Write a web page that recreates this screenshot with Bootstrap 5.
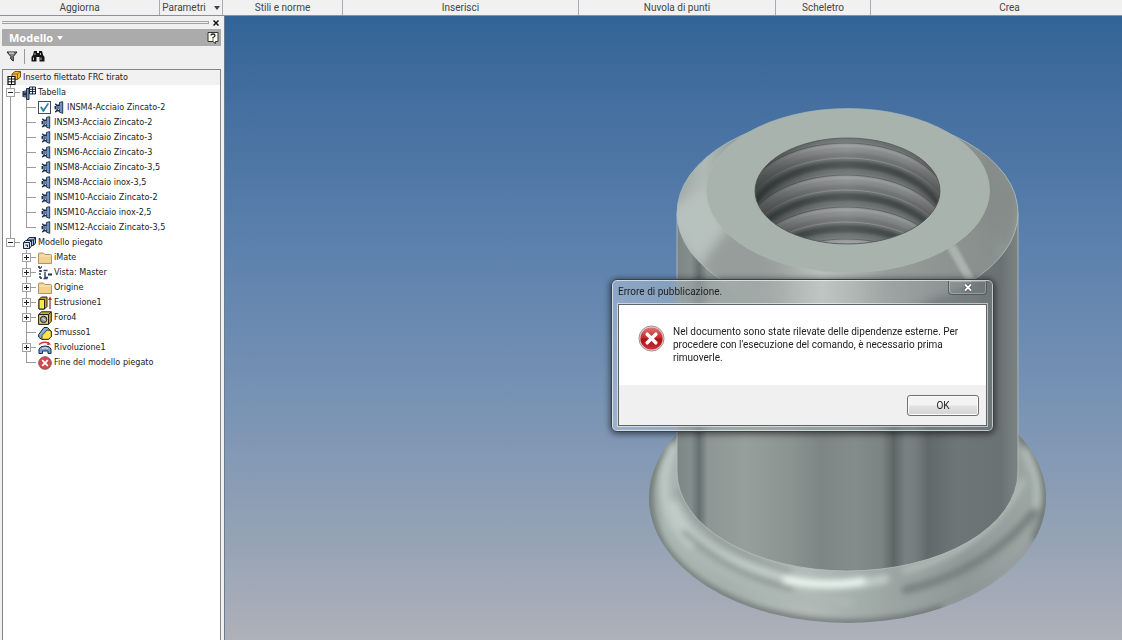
<!DOCTYPE html>
<html lang="it">
<head>
<meta charset="utf-8">
<meta name="viewport" content="width=device-width, initial-scale=1">
<title>Inserto filettato FRC tirato</title>
<link rel="stylesheet" href="https://cdn.jsdelivr.net/npm/bootstrap@5.3.0/dist/css/bootstrap.min.css">
<style>
  body { font-family: Roboto, "Open Sans", sans-serif; font-size: 10px; line-height: 15px; color: #333; background: #f0f0f0; }
  button { font: inherit; color: inherit; border: 0; background: none; padding: 0; }

  /* ribbon panel titles */
  .ribbon { height: 16px; background: #f1f1f1; border-bottom: 1px solid #8d9196; color: #454545; }
  .panel-title { border-right: 1px solid #a9adb2; }
  .w-update { width: 160px; } .w-params { width: 63px; } .w-styles { width: 120px; }
  .w-insert { width: 236px; } .w-cloud { width: 197px; } .w-frame { width: 95px; }
  .w-create { padding-left: 26px; }
  .caret { border: 3px solid transparent; border-top: 4px solid #444; border-bottom: 0; }

  /* model browser */
  .browser { width: 225px; border-right: 1px solid #6c7c8e; padding: 0 3px 0 2px; }
  .grip { height: 3px; border: 1px solid #a3a3a3; border-left: 0; }
  .strip { height: 13px; padding-right: 2px; gap: 4px; }
  .browser-head { height: 17px; background: #ababab; color: #fff; font-family: "Open Sans", sans-serif; font-size: 11px; padding: 0 2px 0 7px; }
  .caret-light { border-top-color: #fff; }
  .tools { height: 23px; padding: 0 0 3px 4px; gap: 6px; }
  .tool-rule { width: 1px; height: 15px; background: #9a9a9a; }
  .tree-box { border: 1px solid #858585; border-bottom: 0; background: #fff; color: #222; font-family: "DejaVu Sans Condensed", "DejaVu Sans", sans-serif; font-size: 9px; }
  .tree-root { background: #f1f1f1; padding-left: 4px; }
  .node { height: 15px; white-space: nowrap; }
  .node svg { width: 14px; height: 14px; margin-right: 2px; flex: none; }
  .node .table-mark { width: 10px; height: 13px; margin: 0 3px; }
  .branch > li { background: linear-gradient(#9b9b9b, #9b9b9b) 7px 0 / 1px 100% no-repeat; }
  .branch > li:last-child { background-size: 1px 8px; }
  .branch .branch { margin-left: 16px; }
  .elbow { width: 19px; height: 15px; padding-left: 3px; flex: none; background: linear-gradient(#9b9b9b, #9b9b9b) 7px 7px / 10px 1px no-repeat; }
  .twist { width: 9px; height: 9px; border: 1px solid #a2a2a2; background:
      linear-gradient(#222, #222) 1px 3px / 5px 1px no-repeat, #fff; }
  .twist.closed { background:
      linear-gradient(#222, #222) 1px 3px / 5px 1px no-repeat,
      linear-gradient(#222, #222) 3px 1px / 1px 5px no-repeat, #fff; }
  .pick { appearance: none; width: 13px; height: 13px; margin: 0; border: 1px solid #3d4f63; background: #fff; display: grid; place-items: center; }
  .pick:checked::before { content: ""; width: 9px; height: 9px; background: #2f7fae; clip-path: polygon(0 45%, 18% 40%, 38% 68%, 85% 0, 100% 8%, 42% 100%, 32% 100%); }

  /* drawing area */
  .stage { background: linear-gradient(#326497 0%, #446f9f 14%, #5b80ad 36%, #7893b4 62%, #94a2b5 83%, #aeb1b9 100%); }
  .stage > svg { width: 100%; height: 100%; }

  /* error window */
  .errbox { left: 386px; top: 263px; width: 383px; padding: 1px 6px 5px; border: 1px solid #3b4247; border-radius: 6px;
    background: linear-gradient(90deg, rgba(220,230,240,.35), rgba(190,198,198,.25) 35%, rgba(200,206,205,.35) 55%, rgba(120,128,128,.3));
    backdrop-filter: blur(5px); box-shadow: inset 0 0 0 1px rgba(255,255,255,.6), 0 1px 6px 1px rgba(0,0,0,.55); color: #222; }
  .errbox-title { height: 23px; }
  .errbox-title h1 { font-size: 10px; line-height: 22px; font-weight: 400; }
  .close-x { width: 39px; height: 14px; border: 1px solid rgba(70,76,78,.7); border-top: 0; border-radius: 0 0 4px 4px; box-shadow: inset 0 0 0 1px rgba(255,255,255,.25); }
  .errbox-body { border: 1px solid #5c6468; outline: 1px solid rgba(255,255,255,.55); background: #fff; }
  .message { min-height: 80px; padding: 20px 19px 0; line-height: 13px; }
  .message svg { width: 27px; height: 27px; }
  .errbox-foot { height: 40px; background: #f0f0f0; padding-right: 7px; }
  .ok { width: 72px; height: 21px; border: 1px solid #707070; border-radius: 3px; background: linear-gradient(#f3f3f3 0 48%, #e2e2e2 52%, #d4d4d4); box-shadow: inset 0 0 0 1px #fbfbfb; }
</style>
</head>
<body class="vh-100 d-flex flex-column overflow-hidden">

<svg width="0" height="0" class="position-absolute" aria-hidden="true">
  <symbol id="i-row" viewBox="0 0 10 14">
    <path d="M5.500 1.500L9 .7v12.600L5.500 12z" fill="#7193bd" stroke="#1d2b45"/>
    <path d="M1 3l1.500 1.500H5M1 5.500v3.500M1 12l1.500-1.500H5M3 5v5" fill="none" stroke="#1d2b45" stroke-width="1.600"/>
    <path d="M3 5.500h3v3.500H3z" fill="#5f80ab"/>
  </symbol>
  <symbol id="i-folder" viewBox="0 0 14 14">
    <path d="M.5 12.500V3q0-1 1-1h4l1.500 1.500h5.500q1 0 1 1v8z" fill="#f2d191" stroke="#b0935f"/>
    <path d="M1.500 5h11" stroke="#fbe8bd"/>
  </symbol>
</svg>

<header class="ribbon d-flex text-center flex-shrink-0">
  <div class="panel-title w-update flex-shrink-0">Aggiorna</div>
  <button class="panel-title w-params flex-shrink-0 d-flex align-items-center justify-content-center gap-2">Parametri <span class="caret"></span></button>
  <div class="panel-title w-styles flex-shrink-0">Stili e norme</div>
  <div class="panel-title w-insert flex-shrink-0">Inserisci</div>
  <div class="panel-title w-cloud flex-shrink-0">Nuvola di punti</div>
  <div class="panel-title w-frame flex-shrink-0">Scheletro</div>
  <div class="w-create flex-grow-1">Crea</div>
</header>

<div class="d-flex flex-grow-1 overflow-hidden">
  <aside class="browser d-flex flex-column flex-shrink-0">
    <div class="strip d-flex align-items-center">
      <div class="grip flex-grow-1"></div>
      <button class="d-flex" aria-label="Chiudi"><svg width="6" height="6" viewBox="0 0 6 6"><path d="M.5.5l5 5M5.500.5l-5 5" stroke="#111" stroke-width="1.500"/></svg></button>
    </div>
    <div class="browser-head d-flex align-items-center justify-content-between">
      <button class="d-flex align-items-center gap-1 fw-bold">Modello <span class="caret caret-light"></span></button>
      <button class="d-flex" aria-label="Guida">
        <svg width="12" height="13" viewBox="0 0 12 13"><path d="M1 1.500h10v9H8.500V12.500L6 10.500H1z" fill="#fffef0" stroke="#333"/><path d="M4 4.500q0-1.500 2-1.500t2 1.500q0 1-2 2V7.500M6 8.500v1" fill="none" stroke="#222" stroke-width="1.300"/></svg>
      </button>
    </div>
    <div class="tools d-flex align-items-center">
      <button class="d-flex" aria-label="Filtro"><svg width="12" height="11" viewBox="0 0 11 11"><path d="M.5 1h10L6.800 5.500V10L4.300 8V5.500z" fill="#888" stroke="#222"/><path d="M2.500 2h5" stroke="#eee"/></svg></button>
      <span class="tool-rule"></span>
      <button class="d-flex" aria-label="Trova"><svg width="14" height="12" viewBox="0 0 14 12"><path d="M3 1h3v2h2V1h3l1 4 1.500 2v4.500H8.500V7h-3v4.500H.5V7L2 5z" fill="#161616"/><path d="M2.500 7.500v2.500M10 7.500v2.500M4 3v2M9.500 3v2" stroke="#bbb"/></svg></button>
    </div>

    <div class="tree-box flex-grow-1 overflow-hidden">
      <div class="node tree-root d-flex align-items-center">
        <svg viewBox="0 0 14 14"><path d="M5 3l3-2.500h5.500V6l-3 2.500H5z" fill="#f0b93a" stroke="#7b5410"/><path d="M5 3h5.500L13.500.5M10.500 3v5.500" fill="none" stroke="#7b5410" stroke-width=".8"/><path d="M1 5.500h7v8H1z" fill="#fff" stroke="#111" stroke-width="1.200"/><path d="M1 8h7M1 10.800h7M4.500 5.500v8" stroke="#111"/></svg>
        <span>Inserto filettato FRC tirato</span>
      </div>
      <ul class="branch list-unstyled mb-0">
        <li>
          <div class="node d-flex align-items-center"><span class="elbow d-flex align-items-center"><button class="twist" aria-label="Comprimi Tabella"></button></span>
            <svg viewBox="0 0 14 14"><path d="M4.500 2.500h2.500v11H4.500z" fill="#6f92be" stroke="#1d2b45"/><path d="M1.200 5v6M3 4.500v7M1.200 8H4" stroke="#1d2b45" stroke-width="1.400"/><path d="M7.500 1h6v7h-6z" fill="#fff" stroke="#16233c"/><path d="M7.500 3.300h6M7.500 5.600h6M10.500 1v7" stroke="#16233c"/></svg>
            <span>Tabella</span></div>
          <ul class="branch list-unstyled mb-0">
            <li><div class="node d-flex align-items-center"><span class="elbow"></span><input class="pick" type="checkbox" id="m4" checked><svg class="table-mark"><use href="#i-row"/></svg><label for="m4">INSM4-Acciaio Zincato-2</label></div></li>
            <li><div class="node d-flex align-items-center"><span class="elbow"></span><svg class="table-mark"><use href="#i-row"/></svg><span>INSM3-Acciaio Zincato-2</span></div></li>
            <li><div class="node d-flex align-items-center"><span class="elbow"></span><svg class="table-mark"><use href="#i-row"/></svg><span>INSM5-Acciaio Zincato-3</span></div></li>
            <li><div class="node d-flex align-items-center"><span class="elbow"></span><svg class="table-mark"><use href="#i-row"/></svg><span>INSM6-Acciaio Zincato-3</span></div></li>
            <li><div class="node d-flex align-items-center"><span class="elbow"></span><svg class="table-mark"><use href="#i-row"/></svg><span>INSM8-Acciaio Zincato-3,5</span></div></li>
            <li><div class="node d-flex align-items-center"><span class="elbow"></span><svg class="table-mark"><use href="#i-row"/></svg><span>INSM8-Acciaio inox-3,5</span></div></li>
            <li><div class="node d-flex align-items-center"><span class="elbow"></span><svg class="table-mark"><use href="#i-row"/></svg><span>INSM10-Acciaio Zincato-2</span></div></li>
            <li><div class="node d-flex align-items-center"><span class="elbow"></span><svg class="table-mark"><use href="#i-row"/></svg><span>INSM10-Acciaio inox-2,5</span></div></li>
            <li><div class="node d-flex align-items-center"><span class="elbow"></span><svg class="table-mark"><use href="#i-row"/></svg><span>INSM12-Acciaio Zincato-3,5</span></div></li>
          </ul>
        </li>
        <li>
          <div class="node d-flex align-items-center"><span class="elbow d-flex align-items-center"><button class="twist" aria-label="Comprimi Modello piegato"></button></span>
            <svg viewBox="0 0 14 14"><path d="M5 4l2-2.500h6.500V7l-2 2.500H5z" fill="#a9bddb" stroke="#1b2740"/><path d="M1.500 6.500l2-2h6v5.500l-2 2.500h-6z" fill="#dbe5f3" stroke="#1b2740"/><path d="M1.500 6.500h6l2-2M7.500 6.500v6M3.500 9h2v2M11.500 4v5M5 4h6.500l2-2.500" fill="none" stroke="#1b2740"/></svg>
            <span>Modello piegato</span></div>
          <ul class="branch list-unstyled mb-0">
            <li><div class="node d-flex align-items-center"><span class="elbow d-flex align-items-center"><button class="twist closed" aria-label="Espandi iMate"></button></span><svg><use href="#i-folder"/></svg><span>iMate</span></div></li>
            <li><div class="node d-flex align-items-center"><span class="elbow d-flex align-items-center"><button class="twist closed" aria-label="Espandi Vista"></button></span>
              <svg viewBox="0 0 14 14"><path d="M0 1h4M2 1v12M2 5h3M2 12h3" stroke="#1f2f55" stroke-width="1.400" stroke-dasharray="2 1"/><path d="M5.500 4.500h4M7 6v5.500h3M5.500 12.500h4" fill="none" stroke="#333e63" stroke-width="1.400"/><path d="M10 8.500h4" stroke="#1f2f55" stroke-width="2"/></svg><span>Vista: Master</span></div></li>
            <li><div class="node d-flex align-items-center"><span class="elbow d-flex align-items-center"><button class="twist closed" aria-label="Espandi Origine"></button></span><svg><use href="#i-folder"/></svg><span>Origine</span></div></li>
            <li><div class="node d-flex align-items-center"><span class="elbow d-flex align-items-center"><button class="twist closed" aria-label="Espandi Estrusione1"></button></span>
              <svg viewBox="0 0 14 14"><path d="M1 3.500L3.500 1H9v9.500L6.500 13H1z" fill="#c9a514" stroke="#222"/><path d="M1 3.500h5.500V13H1z" fill="#ffe94a" stroke="#222"/><path d="M12 13V3" stroke="#8c3030" stroke-width="1.200"/><path d="M10 4l2-3.500L14 4z" fill="#c22"/></svg><span>Estrusione1</span></div></li>
            <li><div class="node d-flex align-items-center"><span class="elbow d-flex align-items-center"><button class="twist closed" aria-label="Espandi Foro4"></button></span>
              <svg viewBox="0 0 14 14"><path d="M.7 3.500L3.500.8h9.800v9.500l-2.800 3H.7z" fill="#ccb22c" stroke="#222"/><path d="M.7 3.500h9.800v9.800H.7z" fill="#eedd55" stroke="#222"/><path d="M10.500 3.500L13.300.8" stroke="#222"/><circle cx="5.600" cy="8.400" r="3.200" fill="#8c98a8" stroke="#222"/><path d="M4.500 7.500l3 2" stroke="#fff"/></svg><span>Foro4</span></div></li>
            <li><div class="node d-flex align-items-center"><span class="elbow"></span>
              <svg viewBox="0 0 14 14"><path d="M.7 8.500L6 1.500h3.500L13.300 5.500v5L10.500 13.300H3.500L.7 11z" fill="#7fb2d6" stroke="#222"/><path d="M4 9.500L9 4q3 0 4.300 1.500v5l-2.800 2.800H4z" fill="#ffe34d" stroke="#222" stroke-width=".8"/></svg><span>Smusso1</span></div></li>
            <li><div class="node d-flex align-items-center"><span class="elbow d-flex align-items-center"><button class="twist closed" aria-label="Espandi Rivoluzione1"></button></span>
              <svg viewBox="0 0 14 14"><path d="M1 3.500q5-4 10-1" fill="none" stroke="#c33" stroke-width="1.400"/><path d="M10 .5l3 3-4 .8z" fill="#c33"/><path d="M1 8q1-3 6-3t6 3v4.500h-3V10H4.500v2.500H1z" fill="#7b9fcc" stroke="#1b2b48"/><path d="M4 7.500q3-1.500 6 0" fill="none" stroke="#e3edf8"/></svg><span>Rivoluzione1</span></div></li>
            <li><div class="node d-flex align-items-center"><span class="elbow"></span>
              <svg viewBox="0 0 14 14"><circle cx="7" cy="7" r="6.300" fill="#d64550" stroke="#8c5a5e"/><path d="M4.200 4.200l5.600 5.600M9.800 4.200L4.200 9.800" stroke="#fff" stroke-width="1.800"/></svg><span>Fine del modello piegato</span></div></li>
          </ul>
        </li>
      </ul>
    </div>
  </aside>

  <main class="stage position-relative flex-grow-1 overflow-hidden">
    <svg class="d-block" viewBox="225 16 897 624" preserveAspectRatio="xMidYMid slice" role="img" aria-label="Inserto filettato">
      <defs>
        <linearGradient id="wall" gradientUnits="userSpaceOnUse" x1="677" x2="1018" y1="0" y2="0">
          <stop offset="0" stop-color="#7c8685"/><stop offset=".04" stop-color="#848e8c"/><stop offset=".065" stop-color="#667070"/><stop offset=".09" stop-color="#8d9694"/>
          <stop offset=".2" stop-color="#979f9c"/><stop offset=".33" stop-color="#8c9492"/><stop offset=".42" stop-color="#7d8684"/><stop offset=".52" stop-color="#838c8a"/>
          <stop offset=".6" stop-color="#7c8483"/><stop offset=".635" stop-color="#5e6666"/><stop offset=".67" stop-color="#788080"/><stop offset=".7" stop-color="#757d7e"/>
          <stop offset=".735" stop-color="#62696b"/><stop offset=".82" stop-color="#6e7577"/><stop offset=".95" stop-color="#6b7274"/><stop offset="1" stop-color="#7b8483"/>
        </linearGradient>
        <linearGradient id="cone" gradientUnits="userSpaceOnUse" x1="677" x2="1018" y1="0" y2="0">
          <stop offset="0" stop-color="#9da7a4"/><stop offset=".08" stop-color="#b0bab6"/><stop offset=".17" stop-color="#969d9b"/><stop offset=".3" stop-color="#9da3a1"/>
          <stop offset=".42" stop-color="#bac2be"/><stop offset=".5" stop-color="#aeb6b2"/><stop offset=".62" stop-color="#979d9b"/><stop offset=".8" stop-color="#8d9391"/><stop offset=".92" stop-color="#888f8d"/><stop offset="1" stop-color="#98a19e"/>
        </linearGradient>
        <linearGradient id="rim" gradientUnits="userSpaceOnUse" x1="649" x2="1046" y1="0" y2="0">
          <stop offset="0" stop-color="#8f9a97"/><stop offset=".04" stop-color="#a9b5b1"/><stop offset=".2" stop-color="#a6b1ad"/><stop offset=".4" stop-color="#b1bbb7"/>
          <stop offset=".6" stop-color="#9ca6a3"/><stop offset=".8" stop-color="#909997"/><stop offset=".95" stop-color="#9ba5a2"/><stop offset="1" stop-color="#87918f"/>
        </linearGradient>
        <linearGradient id="boreShade" x1="0" x2="1" y1="0" y2="0">
          <stop offset="0" stop-color="#222828" stop-opacity=".65"/><stop offset=".25" stop-color="#333" stop-opacity=".15"/><stop offset=".5" stop-color="#fff" stop-opacity=".08"/><stop offset=".8" stop-color="#555" stop-opacity=".05"/><stop offset="1" stop-color="#333" stop-opacity=".5"/>
        </linearGradient>
        <clipPath id="boreClip"><ellipse cx="847.500" cy="191" rx="92.500" ry="53"/></clipPath>
        <clipPath id="coneClip"><ellipse cx="847.500" cy="213" rx="170.500" ry="99"/></clipPath>
        <clipPath id="rimClip"><ellipse cx="847.500" cy="498" rx="198.500" ry="125"/></clipPath>
        <filter id="soft1"><feGaussianBlur stdDeviation="1.500"/></filter>
        <filter id="soft3" x="-20%" y="-20%" width="140%" height="140%"><feGaussianBlur stdDeviation="3"/></filter>
        <filter id="soft6" x="-30%" y="-30%" width="160%" height="160%"><feGaussianBlur stdDeviation="6"/></filter>
        <g id="thread" fill="none">
          <g filter="url(#soft1)">
            <ellipse cx="846" cy="225" rx="102" ry="62" stroke="#414747" stroke-width="11"/>
            <ellipse cx="846" cy="218" rx="102" ry="62" stroke="#6e7272" stroke-width="9"/>
            <ellipse cx="846" cy="211" rx="102" ry="62" stroke="#858889" stroke-width="7"/>
            <ellipse cx="846" cy="207" rx="102" ry="62" stroke="#a3a6a7" stroke-width="3"/>
          </g>
          <ellipse cx="846" cy="220" rx="102" ry="62" stroke="#929696" stroke-width=".7"/>
          <ellipse cx="846" cy="205" rx="102" ry="62" stroke="#474d4d" stroke-width=".7"/>
        </g>
      </defs>

      <!-- lower rim -->
      <g clip-path="url(#rimClip)">
        <ellipse cx="847.500" cy="498" rx="198.500" ry="125" fill="url(#rim)"/>
        <g fill="none" stroke-linecap="round" filter="url(#soft3)">
          <ellipse cx="847.500" cy="498" rx="199" ry="125" stroke="#66706e" stroke-width="6"/>
          <path d="M672 448Q650 505 690 545" stroke="#bdc8c4" stroke-width="9"/>
          <path d="M679 490Q700 545 790 572" stroke="#8b9592" stroke-width="4"/>
          <path d="M674 505Q690 555 790 579Q840 590 885 579" stroke="#c3cdc9" stroke-width="8"/>
          <path d="M684 532Q735 576 792 588" stroke="#7f8986" stroke-width="4"/>
          <path d="M786 580Q825 588 862 581" stroke="#f1fbf6" stroke-width="7"/>
          <path d="M690 552Q760 602 850 602" stroke="#adb7b3" stroke-width="7"/>
          <path d="M905 570Q985 550 1022 482" stroke="#b0bab6" stroke-width="7"/>
          <path d="M905 590Q985 572 1034 512" stroke="#737d7a" stroke-width="7"/>
          <path d="M1026 452Q1040 480 1036 505" stroke="#b2bdb9" stroke-width="8"/>
          <path d="M945 608Q1005 586 1034 542" stroke="#a3a9ad" stroke-width="4"/>
        </g>
      </g>
      <!-- body -->
      <path d="M677 213V472A170.500 99 0 0 0 1018 472V213z" fill="url(#wall)" stroke="#b5c0bc" stroke-width=".8"/>
      <!-- chamfer -->
      <g clip-path="url(#coneClip)">
        <ellipse cx="847.500" cy="213" rx="170.500" ry="99" fill="url(#cone)"/>
        <g filter="url(#soft6)">
          <path d="M660 215L705 185 728 228 698 262z" fill="#b7c1bd"/>
          <path d="M725 232L770 260 770 320 700 268z" fill="#969d9b"/>
          <path d="M985 150L1025 190 1010 250 980 225z" fill="#858c8a"/>
        </g>
        <path d="M947 248l8-4 20 36-7 4z" fill="#abb3b0" filter="url(#soft1)"/>
      </g>
      <ellipse cx="847.500" cy="213" rx="170.500" ry="99" fill="none" stroke="#b4c1bd" stroke-width=".8"/>
      <!-- top face and threaded bore -->
      <ellipse cx="848" cy="190.500" rx="141.500" ry="82" fill="#a9b3ae" stroke="#b0bbb6" stroke-width=".6"/>
      <g clip-path="url(#boreClip)">
        <path d="M750 135h195v112H750z" fill="#686d6d"/>
        <use href="#thread"/>
        <use href="#thread" y="32"/>
        <use href="#thread" y="64"/>
        <use href="#thread" y="96"/>
        <path d="M755 138h185v106H755z" fill="url(#boreShade)"/>
      </g>
      <ellipse cx="847.500" cy="191" rx="92.500" ry="53" fill="none" stroke="#4f5756" stroke-width=".8"/>
    </svg>

    <section class="errbox position-absolute" role="dialog" aria-labelledby="err-title" aria-describedby="err-text">
      <div class="errbox-title d-flex justify-content-between align-items-start">
        <h1 class="mb-0" id="err-title">Errore di pubblicazione.</h1>
        <button class="close-x d-flex align-items-center justify-content-center" aria-label="Chiudi">
          <svg width="10" height="9" viewBox="0 0 10 9"><path d="M2 1.500l6 6M8 1.500l-6 6" stroke="#4a5052" stroke-width="3.200"/><path d="M2 1.500l6 6M8 1.500l-6 6" stroke="#fff" stroke-width="1.800"/></svg>
        </button>
      </div>
      <div class="errbox-body">
        <div class="message d-flex">
          <svg class="flex-shrink-0" viewBox="0 0 28 28" aria-hidden="true">
            <defs><linearGradient id="red" x1="0" x2="0" y1="0" y2="1"><stop offset="0" stop-color="#dc7474"/><stop offset=".48" stop-color="#c4282c"/><stop offset=".52" stop-color="#ac0f14"/><stop offset="1" stop-color="#c8333a"/></linearGradient></defs>
            <circle cx="14" cy="14" r="13" fill="#e2d0d0" stroke="#a58a8a"/><circle cx="14" cy="14" r="11.500" fill="url(#red)"/>
            <path d="M9.500 9.500l9 9M18.500 9.500l-9 9" stroke="#fff" stroke-width="3.600" stroke-linecap="round"/>
          </svg>
          <p class="mb-0 ms-2" id="err-text">Nel documento sono state rilevate delle dipendenze esterne. Per<br>procedere con l'esecuzione del comando, è necessario prima<br>rimuoverle.</p>
        </div>
        <div class="errbox-foot d-flex align-items-center justify-content-end"><button class="ok">OK</button></div>
      </div>
    </section>
  </main>
</div>
<script src="https://cdn.jsdelivr.net/npm/bootstrap@5.3.0/dist/js/bootstrap.bundle.min.js"></script>
</body>
</html>
